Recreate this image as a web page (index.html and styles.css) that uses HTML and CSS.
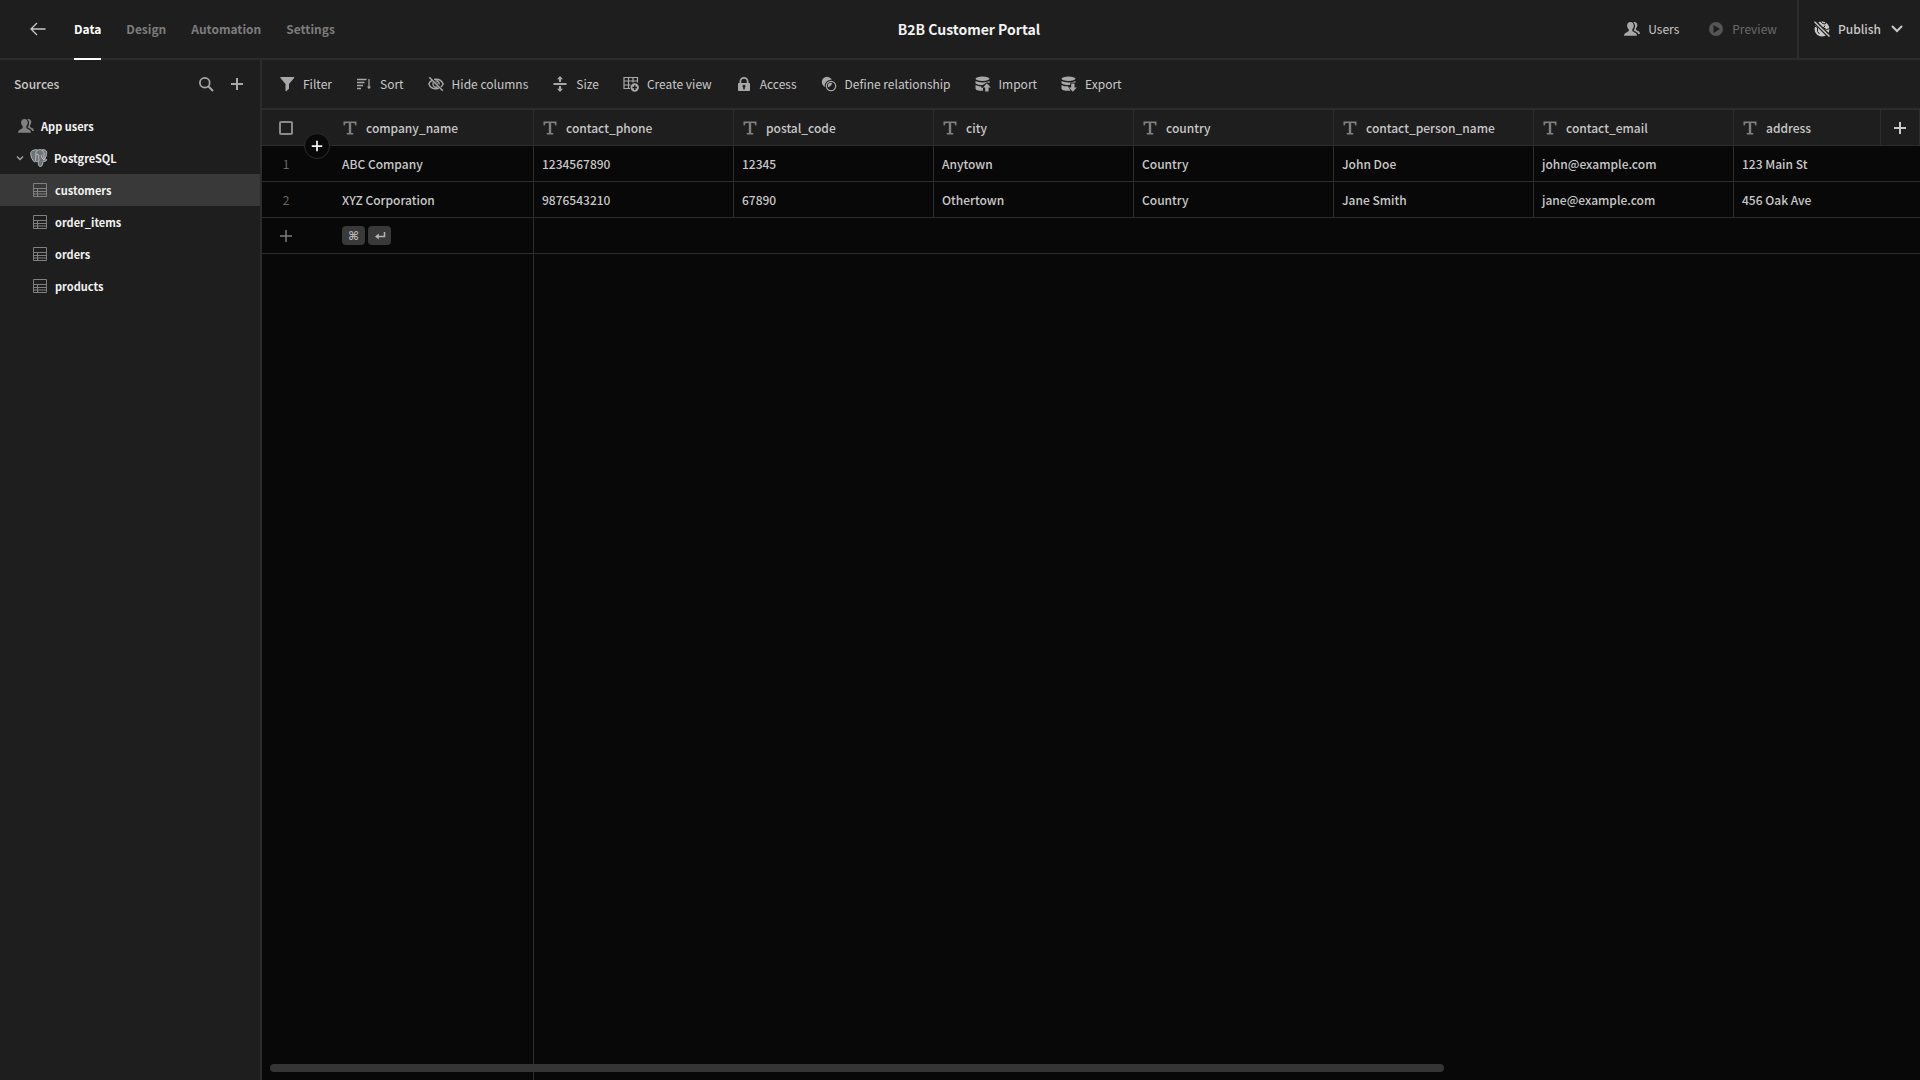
FILE: index.html
```html
<!DOCTYPE html>
<html lang="en">
<head>
<meta charset="utf-8">
<meta name="viewport" content="width=device-width, initial-scale=1">
<title>B2B Customer Portal</title>
<link rel="stylesheet" href="styles.css">
</head>
<body>
<svg class="sprite" aria-hidden="true">
  <symbol id="i-plus" viewBox="0 0 16 16"><path d="M8 2v12M2 8h12" fill="none" stroke="currentColor" stroke-width="2"/></symbol>
  <symbol id="i-text" viewBox="0 0 16 16"><path d="M1.5 1.5h13v4h-1.2c-.2-1.7-.8-2.4-2.4-2.4H9.2v10h2v1.4H4.8v-1.4h2v-10H5.1c-1.6 0-2.2.7-2.4 2.4H1.5z" fill="currentColor"/></symbol>
  <symbol id="i-table" viewBox="0 0 16 16"><path d="M1.5 1.5h13v13h-13zM1.5 6.5h13M1.5 9.5h13M1.5 12h13M5.5 6.5v8" fill="none" stroke="currentColor" stroke-width="1"/></symbol>
  <symbol id="i-users" viewBox="0 0 16 16"><path d="M6.4.9c2.1 0 3.4 1.5 3.4 3.7 0 1.7-.7 2.9-1.5 3.700v1.300c0 .9.6 1.100 2.300 1.800 1.700.7 2.400 1.500 2.400 3.400H0c0-1.900.8-2.700 2.500-3.400 1.600-.7 2.200-.9 2.200-1.800V8.300C3.800 7.500 3.100 6.300 3.100 4.600 3.100 2.400 4.300.9 6.400.9z" fill="currentColor"/><path d="M9.300 1.200c2.300-.9 4 .7 4 2.800 0 1.500-.5 2.500-1.300 3.200v1.100c0 .8.5 1 1.600 1.500 1.500.6 2.300 1.300 2.300 3.200h-1.700c-.5-1.300-1.500-2-3.200-2.700-1.300-.5-1.400-1-.9-1.900 1.100-1.700 1.700-4.900-.8-7.200z" fill="currentColor"/></symbol>
</svg>

<header class="topbar">
  <nav class="tabs" aria-label="Main">
    <a class="back" href="#" aria-label="Back"><svg class="icon" viewBox="0 0 16 16"><path d="M15.5 8H1M7 2L1 8l6 6" fill="none" stroke="currentColor" stroke-width="1.3"/></svg></a>
    <a class="tab tab-active" href="#">Data</a>
    <a class="tab" href="#">Design</a>
    <a class="tab" href="#">Automation</a>
    <a class="tab" href="#">Settings</a>
  </nav>
  <h1 class="title">B2B Customer Portal</h1>
  <div class="actions">
    <button class="tool" type="button"><svg class="icon"><use href="#i-users"/></svg>Users</button>
    <button class="tool tool-disabled" type="button" disabled><svg class="icon" viewBox="0 0 16 16"><path fill-rule="evenodd" d="M8 1a7 7 0 1 0 0 14A7 7 0 0 0 8 1zM5.5 4v8l6.500-4z" fill="currentColor"/></svg>Preview</button>
    <button class="publish" type="button">
      <svg class="icon" viewBox="0 0 16 16"><circle cx="8" cy="8" r="7.500" fill="currentColor"/><path d="M6.500 0l2 2.500 2.500.5 1-2M.5 5l3 1.500v4L5.500 13M11 4.500L9.500 7l3 1.500L16 7.500" fill="none" stroke="#1e1e1e" stroke-width="1"/><path d="M0 0l16 16" stroke="#1e1e1e" stroke-width="4"/><path d="M.5.800l15 14.700" stroke="currentColor" stroke-width="1.500"/></svg>
      Publish
      <svg class="icon" viewBox="0 0 16 16"><path d="M3.500 5.500L8 10l4.500-4.500" fill="none" stroke="currentColor" stroke-width="2" stroke-linecap="round"/></svg>
    </button>
  </div>
</header>

<div class="workspace">
  <aside class="sidebar">
    <div class="sidebar-head">
      <h2 class="sidebar-title">Sources</h2>
      <button class="icon-button" type="button" aria-label="Search"><svg class="icon" viewBox="0 0 16 16"><circle cx="6.8" cy="6.8" r="4.9" fill="none" stroke="currentColor" stroke-width="1.7"/><path d="M10.500 10.500L15 15" stroke="currentColor" stroke-width="2"/></svg></button>
      <button class="icon-button" type="button" aria-label="Add source"><svg class="icon"><use href="#i-plus"/></svg></button>
    </div>
    <nav class="sources" aria-label="Sources">
      <a class="source source-root" href="#"><svg class="icon"><use href="#i-users"/></svg>App users</a>
      <a class="source source-db" href="#">
        <svg class="chevron" viewBox="0 0 8 8"><path d="M1 2.500l3 3 3-3" fill="none" stroke="currentColor" stroke-width="1.3"/></svg>
        <svg class="icon-db" viewBox="0 0 18 18"><path d="M3.600 1.200C5.200.4 6.600.7 7.800 1.100 9 .5 10.600.6 11.600 1c1.600-.6 3.600-.2 4.600.9 1.200 1.400.3 5.400-1.800 8.800.7.300 1.700.1 2.500 0-.6 1.300-2.100 1.900-3.800 1.700-.5 1.500-.2 4.600-2.300 5-2 .3-2.400-1-2.500-2.800l-.1-2.500c-1 .7-2.500.6-3.200.4l-.6.300C2.600 12 .8 7.500.7 4.500.6 2.900 1.700 1.700 3.600 1.200z" fill="#6c7478" stroke="#b9b9b9" stroke-width="1"/><path d="M7.600 1.200C5.500 2.500 5.800 5 5.900 7.200c.1 1.600-.6 3-.4 4.500M5.800 6c1-.8 2.600-.8 2.900.2.300 1.500-.4 2.700.2 4.100.3 1 .3 1.600-.7 1.800M11.600 1.200c2.400 1.500 3 3.300 2.300 5.500-.3 1.500.4 2.600.4 3.800M12 5.600c-.9.600-.4 2.200.2 3.400.6 1.100 1 1.600 2 1.900" fill="none" stroke="#c6c6c6" stroke-width=".9"/></svg>
        PostgreSQL
      </a>
      <a class="source source-table source-active" href="#" aria-current="page"><svg class="icon"><use href="#i-table"/></svg>customers</a>
      <a class="source source-table" href="#"><svg class="icon"><use href="#i-table"/></svg>order_items</a>
      <a class="source source-table" href="#"><svg class="icon"><use href="#i-table"/></svg>orders</a>
      <a class="source source-table" href="#"><svg class="icon"><use href="#i-table"/></svg>products</a>
    </nav>
  </aside>

  <main class="content">
    <div class="toolbar" role="toolbar" aria-label="Table tools">
      <button class="tool" type="button"><svg class="icon" viewBox="0 0 16 16"><path d="M1.800 1h12.900c.5 0 .6.500.4.900L10 8v4.800l-2.800 2.500c-.3.200-.7.100-.7-.3V8L1.400 1.900C1.200 1.500 1.300 1 1.800 1z" fill="currentColor"/></svg>Filter</button>
      <button class="tool" type="button"><svg class="icon" viewBox="0 0 16 16"><path d="M1 3.500h9.500M1 6.500h7.500M1 9.500h6M1 12.500h4" stroke="currentColor" stroke-width="1.500"/><path d="M13 3v8" stroke="currentColor" stroke-width="1.2"/><path d="M11 10.500h4L13 13.200z" fill="currentColor"/></svg>Sort</button>
      <button class="tool" type="button"><svg class="icon" viewBox="0 0 16 16"><path d="M4 4.300C2.500 5.200 1.200 6.600.8 8c1 2.500 4 4.800 7.200 4.800 1 0 2-.2 2.900-.6M6 3.400c.6-.1 1.300-.2 2-.2 3.200 0 6.200 2.300 7.200 4.800-.5 1-1.300 2.100-2.400 3M5.300 6.300a3.200 3.200 0 0 0 4.200 4.500M7.300 4.900a3.200 3.200 0 0 1 3.900 3.600" fill="none" stroke="currentColor" stroke-width="1.4"/><path d="M1.300 1.300l13.500 13.400" stroke="currentColor" stroke-width="1.500"/><path d="M7.900 6.200a1.900 1.900 0 0 1 2 2z" fill="currentColor"/></svg>Hide columns</button>
      <button class="tool" type="button"><svg class="icon" viewBox="0 0 16 16"><path d="M1.500 8h13" stroke="currentColor" stroke-width="2"/><path d="M8 0l3 3.300H9V6H7V3.300H5zM8 16l3-3.300H9V10H7v2.700H5z" fill="currentColor"/></svg>Size</button>
      <button class="tool" type="button"><svg class="icon" viewBox="0 0 16 16"><path d="M7 12.500H1V1.500h13.500v5M1 5h13.500M1 9h6.500M5.500 1.500v11M10 1.500v5" fill="none" stroke="currentColor" stroke-width="1.2"/><path fill-rule="evenodd" d="M11.700 7.300a4.200 4.200 0 1 0 0 8.400 4.200 4.200 0 0 0 0-8.400zM11 9.200h1.500v1.600H14v1.500h-1.500v1.600H11v-1.600H9.400v-1.500H11z" fill="currentColor"/></svg>Create view</button>
      <button class="tool" type="button"><svg class="icon" viewBox="0 0 16 16"><path fill-rule="evenodd" d="M3.500 7V5.500a4.500 4.500 0 0 1 9 0V7h.8c.4 0 .7.300.7.700v6.600c0 .4-.3.700-.7.700H2.700c-.4 0-.7-.3-.7-.7V7.700c0-.4.300-.7.700-.7zM5.200 7h5.600V5.500a2.800 2.800 0 0 0-5.600 0zM8 8.800a1.400 1.400 0 0 0-.8 2.600v2h1.600v-2A1.400 1.400 0 0 0 8 8.800z" fill="currentColor"/></svg>Access</button>
      <button class="tool" type="button"><svg class="icon" viewBox="0 0 16 16"><circle cx="6" cy="6" r="5.200" fill="currentColor"/><circle cx="10" cy="10" r="4.700" fill="none" stroke="#1e1e1e" stroke-width="3"/><circle cx="10" cy="10" r="4.700" fill="none" stroke="currentColor" stroke-width="1.2"/></svg>Define relationship</button>
      <button class="tool" type="button"><svg class="icon" viewBox="0 0 16 16"><ellipse cx="7.500" cy="2.800" rx="7" ry="2.200" fill="currentColor"/><path d="M.5 5c3 1.900 11 1.900 14 0v2L12 6.300 7.800 9C4.500 9 1.500 8.500.5 7.200zM.5 9c1.500 1 3.500 1.300 5.700 1.300v1.500H8v3C4.500 15 .5 14.300.5 12.500zM11.800 7.300l4 4.300h-2.300v4h-3.300v-4H8z" fill="currentColor"/></svg>Import</button>
      <button class="tool" type="button"><svg class="icon" viewBox="0 0 16 16"><ellipse cx="7.500" cy="2.800" rx="7" ry="2.200" fill="currentColor"/><path d="M.5 5c3 1.900 11 1.900 14 0v1.500H9.200V9C5 9.200 1.500 8.500.5 7.200zM.5 9c2 1.300 4.500 1.300 6.500 1.300l2.500 4.500C4.500 15 .5 14.300.5 12.500zM10.200 7.500h3.300v4h2.300l-4 4.200-3.800-4.200h2.200z" fill="currentColor"/></svg>Export</button>
    </div>

    <div class="grid">
      <table class="table">
        <colgroup><col class="col-gutter"><col class="col-data" span="7"><col></colgroup>
        <thead>
          <tr>
            <th class="gutter"><input class="check" type="checkbox" aria-label="Select all rows"></th>
            <th><span class="field"><svg class="icon"><use href="#i-text"/></svg>company_name</span></th>
            <th><span class="field"><svg class="icon"><use href="#i-text"/></svg>contact_phone</span></th>
            <th><span class="field"><svg class="icon"><use href="#i-text"/></svg>postal_code</span></th>
            <th><span class="field"><svg class="icon"><use href="#i-text"/></svg>city</span></th>
            <th><span class="field"><svg class="icon"><use href="#i-text"/></svg>country</span></th>
            <th><span class="field"><svg class="icon"><use href="#i-text"/></svg>contact_person_name</span></th>
            <th><span class="field"><svg class="icon"><use href="#i-text"/></svg>contact_email</span></th>
            <th><span class="field"><svg class="icon"><use href="#i-text"/></svg>address</span></th>
          </tr>
        </thead>
        <tbody>
          <tr><td class="gutter">1</td><td>ABC Company</td><td>1234567890</td><td>12345</td><td>Anytown</td><td>Country</td><td>John Doe</td><td>john@example.com</td><td>123 Main St</td></tr>
          <tr><td class="gutter">2</td><td>XYZ Corporation</td><td>9876543210</td><td>67890</td><td>Othertown</td><td>Country</td><td>Jane Smith</td><td>jane@example.com</td><td>456 Oak Ave</td></tr>
          <tr>
            <td class="gutter"><button class="icon-button" type="button" aria-label="Add row"><svg class="icon" viewBox="0 0 16 16"><path d="M8 2v12M2 8h12" fill="none" stroke="currentColor" stroke-width="1.500"/></svg></button></td>
            <td><span class="keys"><kbd class="key">⌘</kbd><kbd class="key"><svg class="key-icon" viewBox="0 0 12 12"><path d="M10.500 2v4.500H3" fill="none" stroke="currentColor" stroke-width="1.5"/><path d="M4.800 3.500v6L1 6.500z" fill="currentColor"/></svg></kbd></span></td>
            <td colspan="7"></td>
          </tr>
        </tbody>
      </table>
      <button class="add-column" type="button" aria-label="Add column"><svg class="icon"><use href="#i-plus"/></svg></button>
      <button class="insert-row" type="button" aria-label="Insert row"><svg class="icon"><use href="#i-plus"/></svg></button>
      <div class="scrollbar"></div>
    </div>
  </main>
</div>
</body>
</html>
```
FILE: styles.css
```css
:root {
  --panel: #1e1e1e;
  --line: #2c2c2c;
  --grid: #080808;
  --selected: #393939;
  --muted: #7c7c7c;
  --icon: #a8a8a8;
  --text: #c8c8c8;
  --bright: #f2f2f2;
}

* { box-sizing: border-box; }

body {
  margin: 0;
  height: 100vh;
  display: flex;
  flex-direction: column;
  overflow: hidden;
  background: var(--panel);
  color: var(--text);
  font: 400 12px/20px "Noto Sans CJK SC", "Noto Sans", sans-serif;
}

button {
  display: flex;
  align-items: center;
  padding: 0;
  border: 0;
  background: none;
  color: inherit;
  font: inherit;
  white-space: nowrap;
}

a { color: inherit; text-decoration: none; }

.sprite { position: absolute; width: 0; height: 0; }

.icon { display: block; flex: none; width: 16px; height: 16px; }

/* Top bar */
.topbar {
  flex: none;
  display: grid;
  grid-template-columns: 1fr auto 1fr;
  grid-template-rows: 58px;
  padding-left: 18px;
  border-bottom: 2px solid var(--line);
}

.tabs { display: flex; gap: 25px; }

.back {
  display: flex;
  align-items: center;
  padding: 0 3px 0 12px;
  color: var(--text);
}

/* The tab's bottom border lies over the bar's own */
.tab {
  display: flex;
  align-items: center;
  height: 60px;
  border-bottom: 2px solid transparent;
  color: var(--muted);
  font-weight: 700;
}

.tab-active { color: #fff; border-bottom-color: #fff; }

.title {
  align-self: center;
  margin: 0;
  color: var(--bright);
  font-size: 14px;
  font-weight: 700;
}

.actions { display: flex; justify-content: flex-end; }

.tool { gap: 8px; }
.tool .icon { color: var(--icon); }
.actions .tool { margin-right: 29px; }
.tool-disabled { color: #6a6a6a; }
.tool-disabled .icon { color: #555; }
.actions .tool-disabled { margin-right: 20px; }

.publish {
  gap: 8px;
  padding: 0 15px;
  border-left: 2px solid var(--line);
  font-weight: 500;
}

/* Sidebar */
.workspace { flex: 1; display: flex; min-height: 0; }

.sidebar { flex: none; width: 262px; border-right: 2px solid var(--line); }

.sidebar-head {
  display: flex;
  align-items: center;
  gap: 15px;
  height: 50px;
  padding: 0 15px 2px 14px;
}

.sidebar-title { flex: 1; margin: 0; font-size: 12px; font-weight: 500; }

.icon-button { color: var(--icon); }

.source {
  display: flex;
  align-items: center;
  gap: 7px;
  height: 32px;
  color: var(--bright);
  font-size: 11px;
  font-weight: 700;
}

.source .icon { color: #808080; }
.source-root { padding-left: 18px; }
.source-db { padding-left: 16px; gap: 6px; }
.source-table { padding-left: 32px; }
.source-active { background: var(--selected); }
.chevron { width: 8px; height: 8px; color: var(--icon); }
.icon-db { width: 18px; height: 18px; }

/* Toolbar */
.content { flex: 1; display: flex; flex-direction: column; min-width: 0; }

.toolbar {
  flex: none;
  display: flex;
  gap: 24px;
  height: 50px;
  padding: 0 17px;
  border-bottom: 2px solid var(--line);
}

/* Data grid; the background draws the edge of the pinned column */
.grid {
  position: relative;
  flex: 1;
  min-height: 0;
  overflow: hidden;
  background: linear-gradient(var(--line), var(--line)) 271px 0 / 1px 100% no-repeat var(--grid);
}

.table {
  width: 100%;
  min-width: 1672px;
  table-layout: fixed;
  border-collapse: separate;
  border-spacing: 0;
}

.col-gutter { width: 72px; }
.col-data { width: 200px; }

.table th, .table td {
  height: 36px;
  padding: 0 8px;
  border-right: 1px solid var(--line);
  border-bottom: 1px solid var(--line);
  text-align: left;
  font-weight: 500;
  white-space: nowrap;
}

.table th { background: var(--panel); }
.table th:last-child, .table td:last-child { border-right: 0; }

.table .gutter {
  padding: 0 24px 0 0;
  border-right: 0;
  color: #6a6a6a;
  text-align: center;
  font-weight: 400;
}

.gutter .icon-button { margin: 0 auto; color: var(--muted); }

.check {
  display: block;
  appearance: none;
  width: 14px;
  height: 14px;
  margin: 0 auto;
  border: 2px solid #8a8a8a;
  border-radius: 2px;
}

.field { display: flex; align-items: center; gap: 8px; }
.field .icon { color: #808080; }

.keys { display: flex; gap: 3px; }

.key {
  display: flex;
  align-items: center;
  justify-content: center;
  width: 23px;
  height: 19px;
  border-radius: 4px;
  background: #393939;
  color: #b4b4b4;
  font: 700 12px/16px "DejaVu Sans", sans-serif;
}

.key-icon { width: 12px; height: 12px; }

.add-column {
  position: absolute;
  top: 0;
  right: 0;
  justify-content: center;
  width: 40px;
  height: 36px;
  border: solid var(--line);
  border-width: 0 1px 1px;
  background: var(--panel);
}

.insert-row {
  position: absolute;
  top: 23px;
  left: 42px;
  justify-content: center;
  width: 26px;
  height: 26px;
  border: 1px solid var(--line);
  border-radius: 50%;
  background: var(--grid);
  color: var(--bright);
}

.insert-row .icon { width: 14px; height: 14px; }

.scrollbar {
  position: absolute;
  left: 8px;
  bottom: 8px;
  width: 70.8%;
  height: 8px;
  border-radius: 4px;
  background: #353535;
}
```
